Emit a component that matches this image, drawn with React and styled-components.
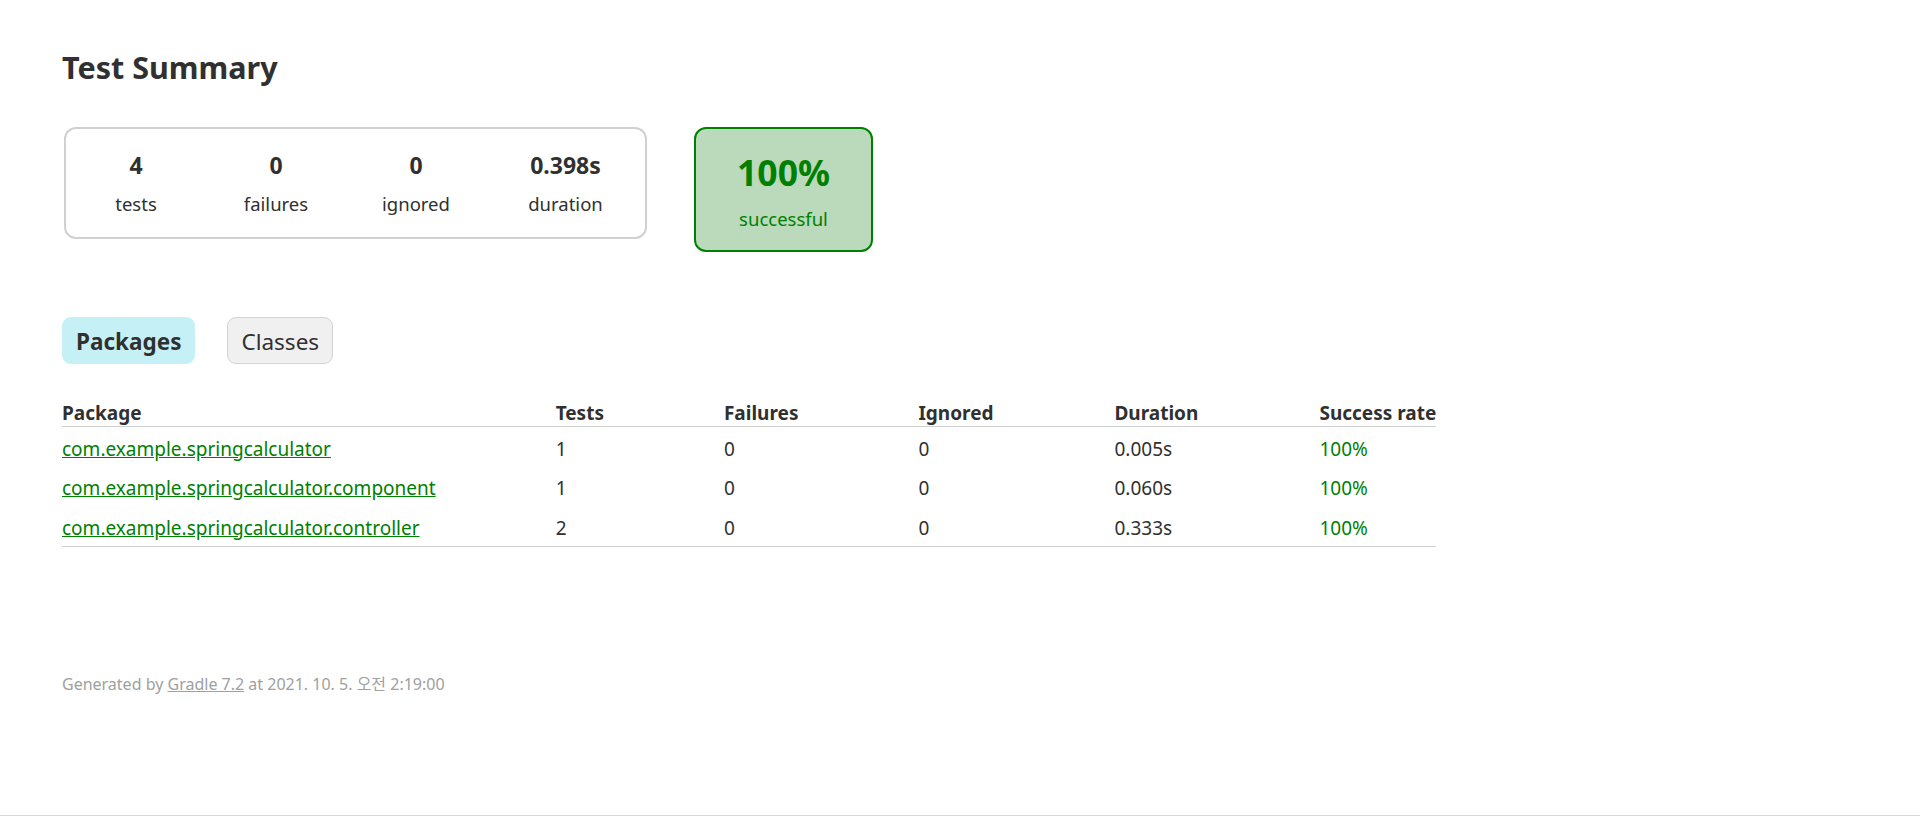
import React from 'react'
import styled, { createGlobalStyle } from 'styled-components'

const GlobalStyle = createGlobalStyle`
  body {
    margin: 0;
    padding: 0;
    background: #ffffff;
    color: #303030;
    font-family: "Noto Sans", "Noto Sans CJK KR", sans-serif;
    font-size: 19px;
  }
`

const counters = [
  { value: '4', label: 'tests', width: 140 },
  { value: '0', label: 'failures', width: 140 },
  { value: '0', label: 'ignored', width: 140 },
  { value: '0.398s', label: 'duration', width: 159 },
]

const columns = [
  { title: 'Package', width: 372 },
  { title: 'Tests', width: 48 },
  { title: 'Failures', width: 73 },
  { title: 'Ignored', width: 76 },
  { title: 'Duration', width: 85 },
  { title: 'Success rate', width: 117 },
]

const packages = [
  { name: 'com.example.springcalculator', tests: 1, failures: 0, ignored: 0, duration: '0.005s', rate: '100%' },
  { name: 'com.example.springcalculator.component', tests: 1, failures: 0, ignored: 0, duration: '0.060s', rate: '100%' },
  { name: 'com.example.springcalculator.controller', tests: 2, failures: 0, ignored: 0, duration: '0.333s', rate: '100%' },
]

export default function App() {
  return (
    <>
      <GlobalStyle />
      <Page>
        <Content>
          <Title>Test Summary</Title>
          <Summary>
            <SummaryGroup>
              {counters.map((c) => (
                <InfoBox key={c.label} $w={c.width}>
                  <Counter>{c.value}</Counter>
                  <InfoLabel>{c.label}</InfoLabel>
                </InfoBox>
              ))}
            </SummaryGroup>
            <SuccessRate>
              <Percent>100%</Percent>
              <InfoLabel>successful</InfoLabel>
            </SuccessRate>
          </Summary>

          <TabLinks>
            <Tab $selected>Packages</Tab>
            <Tab>Classes</Tab>
          </TabLinks>

          <Table>
            <thead>
              <tr>
                {columns.map((col) => (
                  <Th key={col.title} $w={col.width}>{col.title}</Th>
                ))}
              </tr>
            </thead>
            <tbody>
              {packages.map((p) => (
                <tr key={p.name}>
                  <Td><PackageLink href="#">{p.name}</PackageLink></Td>
                  <Td>{p.tests}</Td>
                  <Td>{p.failures}</Td>
                  <Td>{p.ignored}</Td>
                  <Td>{p.duration}</Td>
                  <Td $success>{p.rate}</Td>
                </tr>
              ))}
            </tbody>
          </Table>

          <Footer>
            Generated by <FooterLink href="#">Gradle 7.2</FooterLink> at 2021. 10. 5. 오전 2:19:00
          </Footer>
        </Content>
      </Page>
    </>
  )
}

const Page = styled.div`
  min-height: 816px;
  box-sizing: border-box;
  border-bottom: 1px solid #d9d9d9;
`

const Content = styled.div`
  padding: 47px 62px 0;
`

const Title = styled.h1`
  margin: 0;
  font-size: 30.5px;
  line-height: 40px;
  font-weight: 700;
  white-space: nowrap;
`

const Summary = styled.div`
  display: flex;
  align-items: flex-start;
  margin-top: 40px;
  margin-left: 2px;
`

const SummaryGroup = styled.div`
  display: flex;
  border: 2px solid #d0d0d0;
  border-radius: 12px;
`

const InfoBox = styled.div`
  width: ${(p) => p.$w}px;
  padding: 21px 0 20px;
  text-align: center;
`

const Counter = styled.div`
  font-size: 23px;
  line-height: 30px;
  font-weight: 700;
  margin-bottom: 11px;
`

const InfoLabel = styled.p`
  margin: 0;
  font-size: 18.5px;
  line-height: 26px;
`

const SuccessRate = styled.div`
  width: 175px;
  margin-left: 47px;
  padding: 21px 0 18px;
  text-align: center;
  color: #008000;
  background: #bbd9bb;
  border: 2px solid #008000;
  border-radius: 12px;
`

const Percent = styled.div`
  font-size: 35.5px;
  line-height: 44px;
  font-weight: 700;
  margin-bottom: 12px;
`

const TabLinks = styled.ul`
  display: flex;
  gap: 32px;
  margin: 65px 0 0;
  padding: 0;
  list-style: none;
`

const Tab = styled.li`
  padding: 7px 13px 5px;
  font-size: 22.5px;
  line-height: 33px;
  font-weight: ${(p) => (p.$selected ? 700 : 400)};
  border: 1px solid ${(p) => (p.$selected ? '#c5f0f5' : '#d4d4d4')};
  background: ${(p) => (p.$selected ? '#c5f0f5' : '#f0f0f0')};
  border-radius: 9px;
  cursor: pointer;
`

const Table = styled.table`
  margin-top: 36px;
  border-collapse: collapse;
  border-bottom: 1px solid #d0d0d0;
`

const Th = styled.th`
  min-width: ${(p) => p.$w}px;
  padding: 0 0 0 120px;
  text-align: left;
  white-space: nowrap;
  font-size: 19px;
  line-height: 26px;
  border-bottom: 1px solid #d0d0d0;
  &:first-child {
    padding-left: 0;
  }
`

const Td = styled.td`
  padding: 8.5px 0 4px 120px;
  white-space: nowrap;
  line-height: 27px;
  color: ${(p) => (p.$success ? '#008000' : '#303030')};
  &:first-child {
    padding-left: 0;
  }
`

const PackageLink = styled.a`
  color: #008000;
  text-decoration: underline;
`

const Footer = styled.div`
  margin-top: 126px;
  font-size: 16px;
  line-height: 22px;
  color: #a0a0a0;
  white-space: nowrap;
`

const FooterLink = styled.a`
  color: #a0a0a0;
  text-decoration: underline;
`
